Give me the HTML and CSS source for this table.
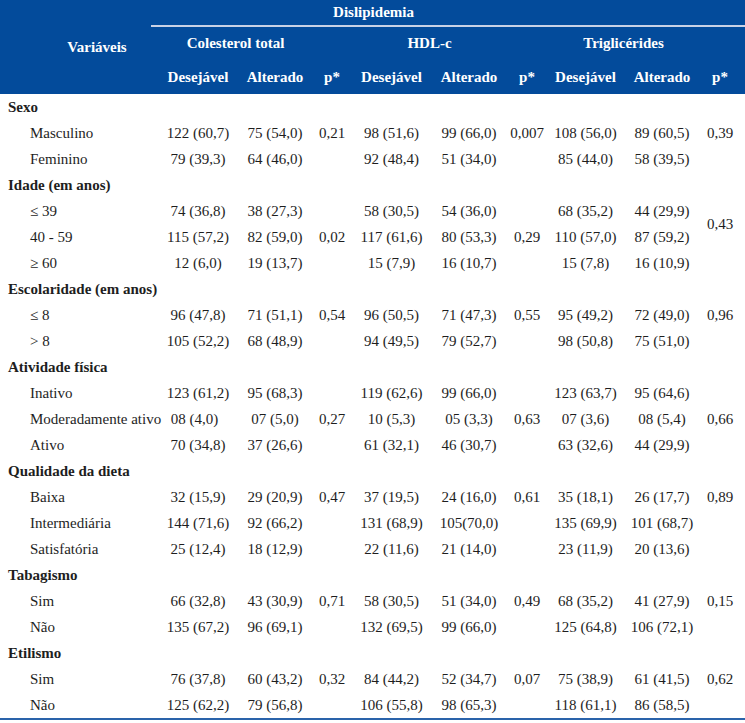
FILE: index.html
```html
<!DOCTYPE html>
<html lang="pt">
<head>
<meta charset="utf-8">
<title>Dislipidemia</title>
<link rel="stylesheet" href="styles.css">
</head>
<body>
<table class="data">
  <colgroup>
    <col class="c-var">
    <col class="c-des1">
    <col class="c-alt">
    <col class="c-p">
    <col class="c-des">
    <col class="c-alt2">
    <col class="c-p">
    <col class="c-des3">
    <col class="c-alt2">
    <col class="c-plast">
  </colgroup>
  <thead>
    <tr class="h1">
      <th class="var" rowspan="3">Variáveis</th>
      <th class="dis" colspan="9">Dislipidemia</th>
    </tr>
    <tr class="h2">
      <th class="grp grp-first" colspan="2">Colesterol total</th>
      <th></th>
      <th class="grp" colspan="2">HDL-c</th>
      <th></th>
      <th class="grp" colspan="2">Triglicérides</th>
      <th></th>
    </tr>
    <tr class="h3">
      <th class="first">Desejável</th><th>Alterado</th><th>p*</th>
      <th>Desejável</th><th>Alterado</th><th>p*</th>
      <th>Desejável</th><th>Alterado</th><th class="last">p*</th>
    </tr>
  </thead>
  <tbody>
    <tr><td class="cat" colspan="10">Sexo</td></tr>
    <tr><td class="sub">Masculino</td><td class="first">122 (60,7)</td><td>75 (54,0)</td><td>0,21</td><td>98 (51,6)</td><td>99 (66,0)</td><td>0,007</td><td>108 (56,0)</td><td>89 (60,5)</td><td class="last">0,39</td></tr>
    <tr><td class="sub">Feminino</td><td class="first">79 (39,3)</td><td>64 (46,0)</td><td></td><td>92 (48,4)</td><td>51 (34,0)</td><td></td><td>85 (44,0)</td><td>58 (39,5)</td><td class="last"></td></tr>

    <tr><td class="cat" colspan="10">Idade (em anos)</td></tr>
    <tr><td class="sub">≤ 39</td><td class="first">74 (36,8)</td><td>38 (27,3)</td><td></td><td>58 (30,5)</td><td>54 (36,0)</td><td></td><td>68 (35,2)</td><td>44 (29,9)</td><td class="last" rowspan="2">0,43</td></tr>
    <tr><td class="sub">40 - 59</td><td class="first">115 (57,2)</td><td>82 (59,0)</td><td>0,02</td><td>117 (61,6)</td><td>80 (53,3)</td><td>0,29</td><td>110 (57,0)</td><td>87 (59,2)</td></tr>
    <tr><td class="sub">≥ 60</td><td class="first">12 (6,0)</td><td>19 (13,7)</td><td></td><td>15 (7,9)</td><td>16 (10,7)</td><td></td><td>15 (7,8)</td><td>16 (10,9)</td><td class="last"></td></tr>

    <tr><td class="cat" colspan="10">Escolaridade (em anos)</td></tr>
    <tr><td class="sub">≤ 8</td><td class="first">96 (47,8)</td><td>71 (51,1)</td><td>0,54</td><td>96 (50,5)</td><td>71 (47,3)</td><td>0,55</td><td>95 (49,2)</td><td>72 (49,0)</td><td class="last">0,96</td></tr>
    <tr><td class="sub">&gt; 8</td><td class="first">105 (52,2)</td><td>68 (48,9)</td><td></td><td>94 (49,5)</td><td>79 (52,7)</td><td></td><td>98 (50,8)</td><td>75 (51,0)</td><td class="last"></td></tr>

    <tr><td class="cat" colspan="10">Atividade física</td></tr>
    <tr><td class="sub">Inativo</td><td class="first">123 (61,2)</td><td>95 (68,3)</td><td></td><td>119 (62,6)</td><td>99 (66,0)</td><td></td><td>123 (63,7)</td><td>95 (64,6)</td><td class="last"></td></tr>
    <tr><td class="sub">Moderadamente ativo</td><td class="first mod">08 (4,0)</td><td>07 (5,0)</td><td>0,27</td><td>10 (5,3)</td><td>05 (3,3)</td><td>0,63</td><td>07 (3,6)</td><td>08 (5,4)</td><td class="last">0,66</td></tr>
    <tr><td class="sub">Ativo</td><td class="first">70 (34,8)</td><td>37 (26,6)</td><td></td><td>61 (32,1)</td><td>46 (30,7)</td><td></td><td>63 (32,6)</td><td>44 (29,9)</td><td class="last"></td></tr>

    <tr><td class="cat" colspan="10">Qualidade da dieta</td></tr>
    <tr><td class="sub">Baixa</td><td class="first">32 (15,9)</td><td>29 (20,9)</td><td>0,47</td><td>37 (19,5)</td><td>24 (16,0)</td><td>0,61</td><td>35 (18,1)</td><td>26 (17,7)</td><td class="last">0,89</td></tr>
    <tr><td class="sub">Intermediária</td><td class="first">144 (71,6)</td><td>92 (66,2)</td><td></td><td>131 (68,9)</td><td>105(70,0)</td><td></td><td>135 (69,9)</td><td>101 (68,7)</td><td class="last"></td></tr>
    <tr><td class="sub">Satisfatória</td><td class="first">25 (12,4)</td><td>18 (12,9)</td><td></td><td>22 (11,6)</td><td>21 (14,0)</td><td></td><td>23 (11,9)</td><td>20 (13,6)</td><td class="last"></td></tr>

    <tr><td class="cat" colspan="10">Tabagismo</td></tr>
    <tr><td class="sub">Sim</td><td class="first">66 (32,8)</td><td>43 (30,9)</td><td>0,71</td><td>58 (30,5)</td><td>51 (34,0)</td><td>0,49</td><td>68 (35,2)</td><td>41 (27,9)</td><td class="last">0,15</td></tr>
    <tr><td class="sub">Não</td><td class="first">135 (67,2)</td><td>96 (69,1)</td><td></td><td>132 (69,5)</td><td>99 (66,0)</td><td></td><td>125 (64,8)</td><td>106 (72,1)</td><td class="last"></td></tr>

    <tr><td class="cat" colspan="10">Etilismo</td></tr>
    <tr><td class="sub">Sim</td><td class="first">76 (37,8)</td><td>60 (43,2)</td><td>0,32</td><td>84 (44,2)</td><td>52 (34,7)</td><td>0,07</td><td>75 (38,9)</td><td>61 (41,5)</td><td class="last">0,62</td></tr>
    <tr><td class="sub">Não</td><td class="first">125 (62,2)</td><td>79 (56,8)</td><td></td><td>106 (55,8)</td><td>98 (65,3)</td><td></td><td>118 (61,1)</td><td>86 (58,5)</td><td class="last"></td></tr>
  </tbody>
</table>
</body>
</html>
```

FILE: styles.css
```css
html, body {
  margin: 0;
  padding: 0;
  background: #ffffff;
}

body {
  font-family: "Liberation Serif", "Times New Roman", "DejaVu Serif", serif;
  font-size: 15px;
  color: #1e1e1e;
}

.data {
  width: 745px;
  table-layout: fixed;
  border-collapse: separate;
  border-spacing: 0;
  border-bottom: 2px solid #2a63aa;
  font-family: "Liberation Serif", "Times New Roman", "DejaVu Serif", serif;
}

.c-var { width: 151px; }
.c-des1 { width: 87px; }
.c-alt { width: 74px; }
.c-p { width: 40px; }
.c-des { width: 79px; }
.c-alt2 { width: 76px; }
.c-des3 { width: 77px; }
.c-plast { width: 45px; }

.data th,
.data td {
  padding: 0;
  text-align: center;
  white-space: nowrap;
  overflow: visible;
  font-family: "Liberation Serif", "Times New Roman", "DejaVu Serif", serif;
}

.data thead th {
  background: #034b9b;
  color: #ffffff;
  font-weight: bold;
}

.h1 th { height: 25px; }
.h1 .dis {
  border-bottom: 2px solid #c9d2e6;
  padding-right: 149px;
}
.h1 .var {
  padding-left: 43px;
}

.h2 th { height: 33px; }
.h2 .grp-first { padding-left: 8px; }

.h3 th { height: 34px; }

.data .first { padding-left: 7px; }
.data .last { padding-right: 5px; }
.data .mod { padding-left: 0; }

.data tbody td { height: 26px; }

.data td.cat {
  text-align: left;
  font-weight: bold;
  padding-left: 8px;
}

.data td.sub {
  text-align: left;
  padding-left: 30px;
}
```
